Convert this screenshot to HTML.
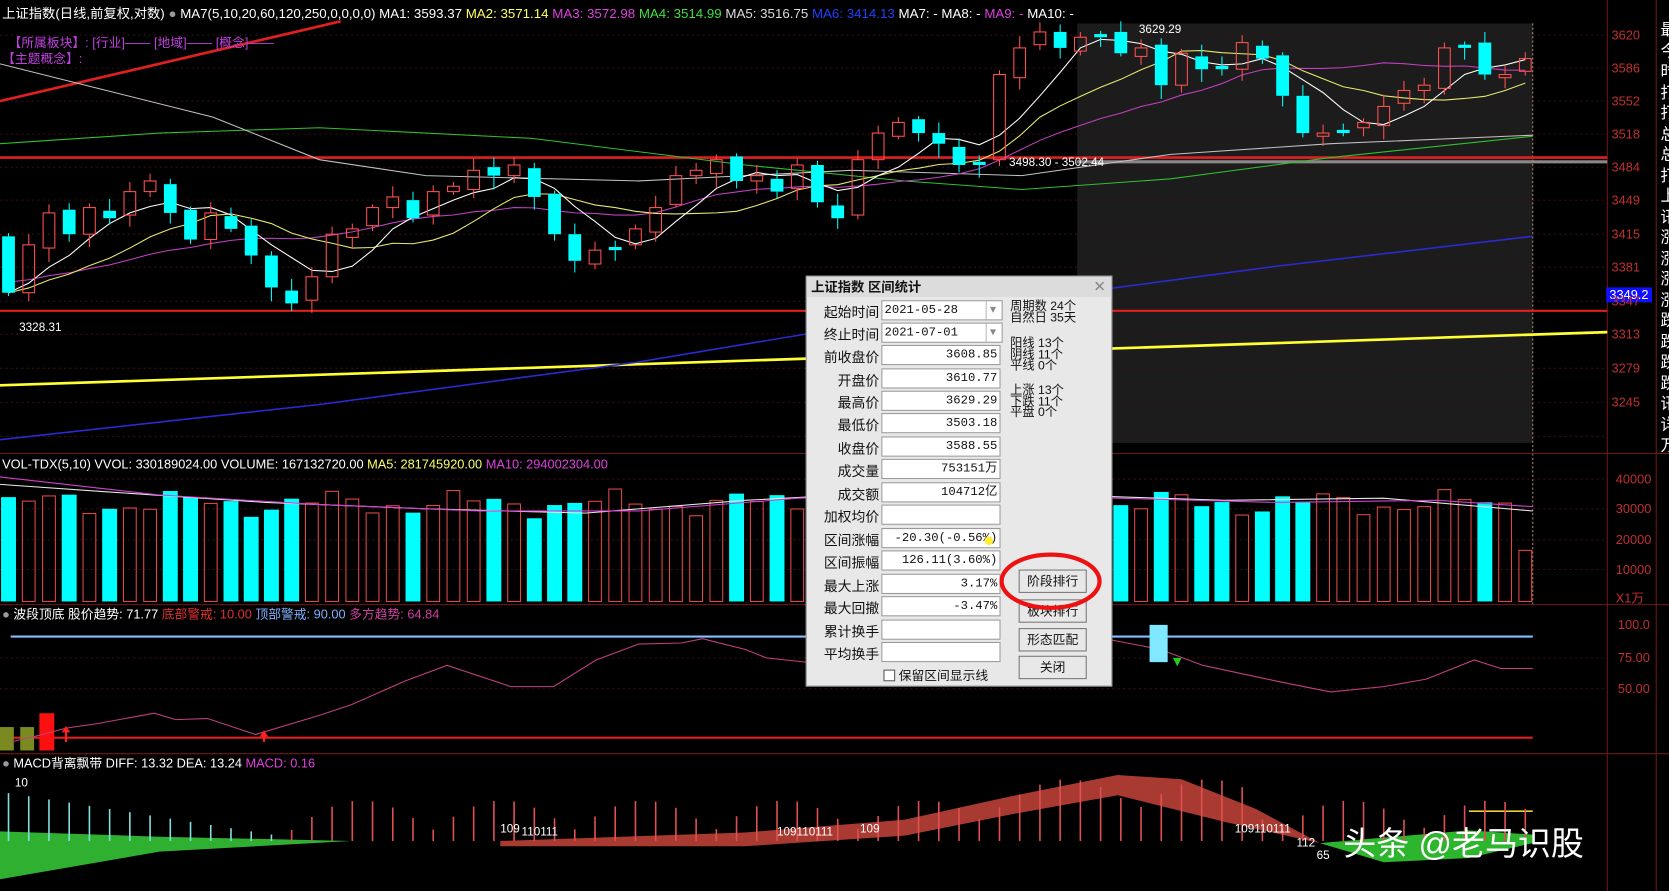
<!DOCTYPE html>
<html><head><meta charset="utf-8">
<style>
html,body{margin:0;padding:0;background:#000;width:1669px;height:891px;overflow:hidden}
#w{position:absolute;left:0;top:0;width:1568px;height:837px;transform:scale(1.06441,1.06452);transform-origin:0 0;font-family:"Liberation Sans","Noto Sans CJK SC",sans-serif;color:#fff}
.t{position:absolute;white-space:nowrap;font-size:12px;line-height:14px}
svg{position:absolute;left:0;top:0}
#dlg{position:absolute;left:757px;top:259px;width:286px;height:384px;background:#e8e8e8;border:1px solid #999;font-size:13px;color:#111}
#dlg .ti{height:19px;background:#dcdcdc;font-weight:bold;padding-left:4px;line-height:20px;font-size:12.5px}
.row{position:absolute;left:0;height:19px;width:190px}
.row .l{position:absolute;right:122px;top:1px;text-align:right;white-space:nowrap}
.row .v{position:absolute;left:70px;top:0;width:108px;height:17px;background:#fff;border:1px solid #9a9a9a;text-align:right;padding-right:2px;font-family:"Liberation Mono","Noto Sans CJK SC",monospace;font-size:11.5px;line-height:17px;box-sizing:content-box}
.btn{position:absolute;left:199px;width:62px;height:20px;background:#e8e8e8;border:1px solid #777;text-align:center;line-height:20px;font-size:12px}
.st{position:absolute;left:191px;font-size:11.5px;line-height:10.5px;white-space:nowrap}
</style></head><body>
<div id="w">
<svg id="c" width="1568" height="837"></svg>

<div class="t" style="left:2px;top:6px;font-size:12.5px">上证指数(日线,前复权,对数) <span style="color:#999">●</span> MA7(5,10,20,60,120,250,0,0,0,0) MA1: 3593.37 <span style="color:#ffff66">MA2: 3571.14</span> <span style="color:#e040e0">MA3: 3572.98</span> <span style="color:#40e040">MA4: 3514.99</span> <span style="color:#ddd">MA5: 3516.75</span> <span style="color:#2040ff">MA6: 3414.13</span> MA7: - <span>MA8: -</span> <span style="color:#e040e0">MA9: -</span> MA10: -</div>
<div class="t" style="left:8px;top:33px;color:#c040e0">【所属板块】: [行业]—— [地域]—— [概念]——</div>
<div class="t" style="left:2px;top:48px;color:#c040e0">【主题概念】:</div>
<div class="t" style="left:1070px;top:21px;font-size:11px">3629.29</div>
<div class="t" style="left:948px;top:146px;font-size:11px">3498.30 - 3502.44</div>
<div class="t" style="left:18px;top:301px;font-size:11px">3328.31</div>
<div class="t" style="left:1509px;top:270px;background:#1010ff;padding:0 3px;font-size:12px">3349.2</div>

<div class="t" style="left:2px;top:429px">VOL-TDX(5,10) VVOL: 330189024.00 VOLUME: 167132720.00 <span style="color:#ffff66">MA5: 281745920.00</span> <span style="color:#e040e0">MA10: 294002304.00</span></div>
<div class="t" style="left:2px;top:570px"><span style="color:#999">●</span> 波段顶底 股价趋势: 71.77 <span style="color:#e03030">底部警戒: 10.00</span> <span style="color:#80b0ff">顶部警戒: 90.00</span> <span style="color:#d040a0">多方趋势: 64.84</span></div>
<div class="t" style="left:2px;top:710px"><span style="color:#999">●</span> MACD背离飘带 DIFF: 13.32 DEA: 13.24 <span style="color:#e040e0">MACD: 0.16</span></div>
<div class="t" style="left:14px;top:729px;font-size:11px">10</div>
<div class="t" style="left:470px;top:772px;font-size:11px">109</div>
<div class="t" style="left:490px;top:775px;font-size:11px">110111</div>
<div class="t" style="left:730px;top:775px;font-size:11px">109110111</div>
<div class="t" style="left:808px;top:772px;font-size:11px">109</div>
<div class="t" style="left:1160px;top:772px;font-size:11px">109110111</div>
<div class="t" style="left:1218px;top:785px;font-size:11px">112</div>
<div class="t" style="left:1237px;top:797px;font-size:11px">65</div>

<div id="ax"></div>
<div class="t" style="left:1262px;top:775px;font-size:31px;line-height:36px;color:#fff">头条 @老马识股</div>

<div id="dlg">
<div class="ti">上证指数 区间统计</div>
<div style="position:absolute;right:5px;top:1px;color:#888;font-size:14px">✕</div>
<div class="row" style="top:22px"><span class="l">起始时间</span><span class="v" style="text-align:left;padding-left:2px;width:108px">2021-05-28<span style="float:right;color:#888;border-left:1px solid #bbb;width:12px;text-align:center">▾</span></span></div>
<div class="row" style="top:43px"><span class="l">终止时间</span><span class="v" style="text-align:left;padding-left:2px;width:108px">2021-07-01<span style="float:right;color:#888;border-left:1px solid #bbb;width:12px;text-align:center">▾</span></span></div>
<div class="row" style="top:64px"><span class="l">前收盘价</span><span class="v">3608.85</span></div>
<div class="row" style="top:86px"><span class="l">开盘价</span><span class="v">3610.77</span></div>
<div class="row" style="top:107px"><span class="l">最高价</span><span class="v">3629.29</span></div>
<div class="row" style="top:128px"><span class="l">最低价</span><span class="v">3503.18</span></div>
<div class="row" style="top:150px"><span class="l">收盘价</span><span class="v">3588.55</span></div>
<div class="row" style="top:171px"><span class="l">成交量</span><span class="v">753151万</span></div>
<div class="row" style="top:193px"><span class="l">成交额</span><span class="v">104712亿</span></div>
<div class="row" style="top:214px"><span class="l">加权均价</span><span class="v"></span></div>
<div class="row" style="top:236px"><span class="l">区间涨幅</span><span class="v">-20.30(-0.56%)</span></div>
<div class="row" style="top:257px"><span class="l">区间振幅</span><span class="v">126.11(3.60%)</span></div>
<div class="row" style="top:279px"><span class="l">最大上涨</span><span class="v">3.17%</span></div>
<div class="row" style="top:300px"><span class="l">最大回撤</span><span class="v">-3.47%</span></div>
<div class="row" style="top:322px"><span class="l">累计换手</span><span class="v"></span></div>
<div class="row" style="top:343px"><span class="l">平均换手</span><span class="v"></span></div>
<div style="position:absolute;left:72px;top:366px;font-size:12px;white-space:nowrap"><span style="display:inline-block;width:9px;height:9px;border:1px solid #555;background:#fff;vertical-align:-1px"></span> 保留区间显示线</div>
<div style="position:absolute;left:167px;top:244px;width:8px;height:8px;border-radius:50%;background:#ffee33"></div>
<div class="st" style="top:23px">周期数 24个<br>自然日 35天</div>
<div class="st" style="top:58px">阳线 13个<br>阴线 11个<br>平线 0个</div>
<div class="st" style="top:102px">上涨 13个<br>下跌 11个<br>平盘 0个</div>
<div class="btn" style="top:275px">阶段排行</div>
<div class="btn" style="top:303px">板块排行</div>
<div class="btn" style="top:330px">形态匹配</div>
<div class="btn" style="top:356px">关闭</div>
<svg width="286" height="384" style="left:0;top:0"><ellipse cx="229" cy="286" rx="46" ry="25" fill="none" stroke="#ee1111" stroke-width="4"/></svg>
</div>
</div>
<script>
var s='';
function ln(a,b,c,d,col,w,da){s+='<line x1="'+a+'" y1="'+b+'" x2="'+c+'" y2="'+d+'" stroke="'+col+'" stroke-width="'+(w||1)+'"'+(da?' stroke-dasharray="'+da+'"':'')+'/>';}
function pl(p,col,w){s+='<polyline points="'+p.map(function(q){return q.join(',')}).join(' ')+'" fill="none" stroke="'+col+'" stroke-width="'+(w||1)+'"/>';}
function pg(p,col){s+='<polygon points="'+p.map(function(q){return q.join(',')}).join(' ')+'" fill="'+col+'"/>';}
function rc(x,y,w,h,f,st){s+='<rect x="'+x+'" y="'+y+'" width="'+w+'" height="'+h+'" fill="'+f+'"'+(st?' stroke="'+st+'"':'')+'/>';}
rc(1012,22,428,394,'#1c1c1c');
ln(1440,22,1440,568,'#aa8866',1,'2,2');
[33,64,95,126,157,188,220,251,283,314,346,378,410].forEach(function(y){ln(0,y,1510,y,'#3a1010',1,'2,3');});
[450,478,507,535].forEach(function(y){ln(0,y,1510,y,'#3a1010',1,'2,3');});
[618,647].forEach(function(y){ln(0,y,1510,y,'#3a1010',1,'2,3');});
ln(0,426,1568,426,'#701818',1);ln(0,568,1568,568,'#701818',1);ln(0,708,1568,708,'#701818',1);
ln(1510,0,1510,837,'#701818',1);ln(1556,0,1556,837,'#701818',1);
ln(0,95,320,20,'#e02020',2.5);
ln(0,148,1510,148,'#e02020',2.5);
ln(1012,152,1510,152,'#888',3);
ln(0,292,1510,292,'#e02020',2);
ln(0,362,1510,312,'#ffff33',2.5);
pl([[0,413],[300,380],[600,340],[900,290],[1200,250],[1440,222]],'#2a2ad0',1.5);
pl([[0,135],[150,125],[300,120],[500,130],[700,155],[850,170],[960,178],[1100,168],[1250,148],[1440,128]],'#30c030',1);
pl([[0,60],[100,85],[200,110],[300,150],[400,165],[600,170],[800,160],[960,165],[1100,145],[1250,135],[1440,127]],'#c0c0c0',1);
var C=[275,230,200,220,195,205,180,170,200,225,200,215,240,270,285,260,220,215,195,185,205,180,175,160,165,155,185,220,245,235,230,215,195,165,160,150,170,165,180,155,190,205,150,125,115,125,135,155,150,70,45,30,45,35,30,50,45,80,50,65,65,40,55,90,125,125,120,115,100,85,80,45,40,70,70,55];
var N=C.length,X=function(i){return 8+i*19;};
function ma(n){var p=[];for(var i=0;i<N;i++){var t=0;for(var k=0;k<n;k++){t+=C[Math.max(0,i-k)];}p.push([X(i),(t/n).toFixed(1)]);}return p;}
pl(ma(20).map(function(q,i){return [q[0],(+q[1]-10).toFixed(1)]}),'#c040c0',1);
pl(ma(10),'#e8e870',1);
pl(ma(5),'#ffffff',1);
for(var i=0;i<N;i++){var x=X(i),o=i?C[i-1]+((i%3)-1)*3:222,c=C[i];if(Math.abs(o-c)<3)c=o+3;var up=c<o,t=Math.min(o,c),b=Math.max(o,c),hi=t-3-(i*7)%9,lo=b+3+(i*5)%11;
 var col=up?'#ff5050':'#00ffff';ln(x,hi,x,t,col,1);ln(x,b,x,lo,col,1);
 if(up)rc(x-5.5,t,11,b-t,'none',col);else rc(x-6,t,12,b-t,col);}
for(var i=0;i<N;i++){var x=X(i),o=i?C[i-1]+((i%3)-1)*3:222,up=C[i]<o;var h=92+8*Math.sin(i*0.9)+6*Math.cos(i*2.3);if(i==N-1)h=48;if(i>46&&i<52)h=105;var col=up?'#e04848':'#00ffff';
 if(up)rc(x-6,565-h,12,h,'none',col);else rc(x-7,565-h,14,h,col);}
pl([[0,455],[100,462],[250,472],[400,478],[550,482],[700,470],[850,462],[1000,465],[1150,470],[1300,468],[1440,480]],'#e8e8e8',1);
pl([[0,448],[150,465],[300,474],[450,480],[600,480],[750,468],[900,462],[1050,468],[1200,472],[1350,470],[1440,476]],'#d040d0',1);
ln(10,598,1440,598,'#80c0ff',2);ln(0,693,1440,693,'#e02020',2);
rc(0,683,13,22,'#7a8a20');rc(19,683,13,22,'#7a8a20');rc(37,670,14,35,'#ff1010');
pl([[10,697],[40,690],[62,684],[90,680],[145,670],[165,676],[195,675],[240,690],[300,672],[330,662],[380,640],[420,625],[480,645],[520,645],[560,620],[600,605],[640,604],[660,600],[700,610],[720,618],[757,622],[1043,601],[1090,610],[1130,625],[1200,640],[1250,650],[1300,645],[1340,638],[1385,620],[1410,628],[1440,628]],'#c04080',1);
ln(62,697,62,686,'#ff2020',2);pg([[58,688],[66,688],[62,682]],'#ff2020');
ln(248,697,248,690,'#ff2020',2);pg([[244,692],[252,692],[248,686]],'#ff2020');
rc(1080,587,17,35,'#80e8ff');pg([[1102,618],[1110,618],[1106,626]],'#20d020');
pg([[0,781],[150,786],[330,790],[150,800],[0,826]],'#30b030');
pg([[470,790],[700,782],[850,770],[950,748],[1050,728],[1110,732],[1180,760],[1240,792],[1150,772],[1050,747],[950,765],[850,785],[700,795],[470,795]],'#a83a32');
pg([[1240,792],[1380,780],[1440,784],[1440,792],[1380,806],[1300,810]],'#2db52d');
ln(1380,762,1440,762,'#e8d030',1.5);
for(var i=0;i<N;i++){var x=X(i);if(i<14){ln(x,790,x,790-Math.max(6,45-3*i),'#80e0e0',1.5);}else{var h=10+28*Math.abs(Math.sin(i*0.45));if(i>48&&i<62)h+=20;ln(x,790,x,790-h,'#e05050',1.5);}}
document.getElementById('c').innerHTML=s;
var ax='',L=[[3620,33],[3586,64],[3552,95],[3518,126],[3484,157],[3449,188],[3415,220],[3381,251],[3347,283],[3313,314],[3279,346],[3245,378]];
L.forEach(function(q){ax+='<div class="t" style="left:1514px;top:'+(q[1]-7)+'px;color:#c03030;font-size:12px">'+q[0]+'</div>';});
[[40000,450],[30000,478],[20000,507],[10000,535],['X1万',562]].forEach(function(q){ax+='<div class="t" style="left:1518px;top:'+(q[1]-7)+'px;color:#c03030;font-size:12px">'+q[0]+'</div>';});
[['100.0',587],['75.00',618],['50.00',647]].forEach(function(q){ax+='<div class="t" style="left:1520px;top:'+(q[1]-7)+'px;color:#c03030;font-size:12px">'+q[0]+'</div>';});
var ch='最今时打打总总打上讯涨涨涨涨跌跌跌跌讯详万';for(var k=0;k<ch.length;k++)ax+='<div class="t" style="left:1560px;top:'+(22+k*19.5)+'px;font-size:15px">'+ch[k]+'</div>';
document.getElementById('ax').innerHTML=ax;
</script>
</body></html>
